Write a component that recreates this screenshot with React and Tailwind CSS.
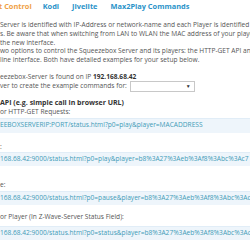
import React from 'react';

// Code line with light blue background
const Code = ({ children, tall }) => (
    <div
        className={`${tall ? 'h-[15px]' : 'h-[14px]'} bg-[#eef5fb] border-t border-[#e1edf7] flex items-center text-[#3f9bb7] text-[6.6px] whitespace-nowrap`}
    >
        {children}
    </div>
);

const App = () => {
    return (
        <div
            className="w-[250px] h-[250px] overflow-hidden bg-white text-[#555] text-[6.6px] leading-[8.8px]"
            style={{ fontFamily: '"Open Sans", sans-serif' }}
        >
            {/* Tabs */}
            <div className="flex h-[12px] items-center font-bold text-[7.4px] text-[#2a93c9] whitespace-nowrap">
                <span className="text-[#f0a046] ml-[-1px]">t Control</span>
                <span className="ml-[11px]">Kodi</span>
                <span className="ml-[13px]">Jivelite</span>
                <span className="ml-[13px]">Max2Play Commands</span>
            </div>

            <div className="mt-[9px] whitespace-nowrap">
                <p>Server is identified with IP-Address or network-name and each Player is identified</p>
                <p>s. Be aware that when switching from LAN to WLAN the MAC address of your player</p>
                <p>the new interface.</p>
                <p>wo options to control the Squeezebox Server and its players: the HTTP-GET API and</p>
                <p>line interface. Both have detailed examples for your setup below.</p>
            </div>

            <div className="mt-[8px] whitespace-nowrap">
                <p>eezebox-Server is found on IP <b className="text-[#333]">192.168.68.42</b></p>
                <div className="flex items-center h-[10px]">
                    ver to create the example commands for:
                    <span className="ml-[3px] w-[65px] h-[11px] border border-[#c8c8c8] bg-white flex items-center justify-end pr-[3px] text-[5px] text-[#333]">▼</span>
                </div>
            </div>

            <h3 className="mt-[6px] font-bold text-[#333] text-[7px] leading-[10px] whitespace-nowrap">
                API (e.g. simple call in browser URL)
            </h3>
            <p className="whitespace-nowrap">or HTTP-GET Requests:</p>

            <div className="mt-[1px]">
                <Code tall>EEBOXSERVERIP:PORT/status.html?p0=play&amp;player=MACADDRESS</Code>
            </div>

            <p className="mt-[10px]">:</p>
            <div className="mt-[1px]">
                <Code>168.68.42:9000/status.html?p0=play&amp;player=b8%3A27%3Aeb%3Af8%3Abc%3Ac7</Code>
            </div>

            <p className="mt-[15px]">e:</p>
            <div className="mt-[1px]">
                <Code>168.68.42:9000/status.html?p0=pause&amp;player=b8%3A27%3Aeb%3Af8%3Abc%3Ac7</Code>
            </div>

            <p className="mt-[8px] whitespace-nowrap">or Player (In Z-Wave-Server Status Field):</p>
            <div className="mt-[4px]">
                <Code>168.68.42:9000/status.html?p0=status&amp;player=b8%3A27%3Aeb%3Af8%3Abc%3Ac7</Code>
            </div>
        </div>
    );
};

export default App;
